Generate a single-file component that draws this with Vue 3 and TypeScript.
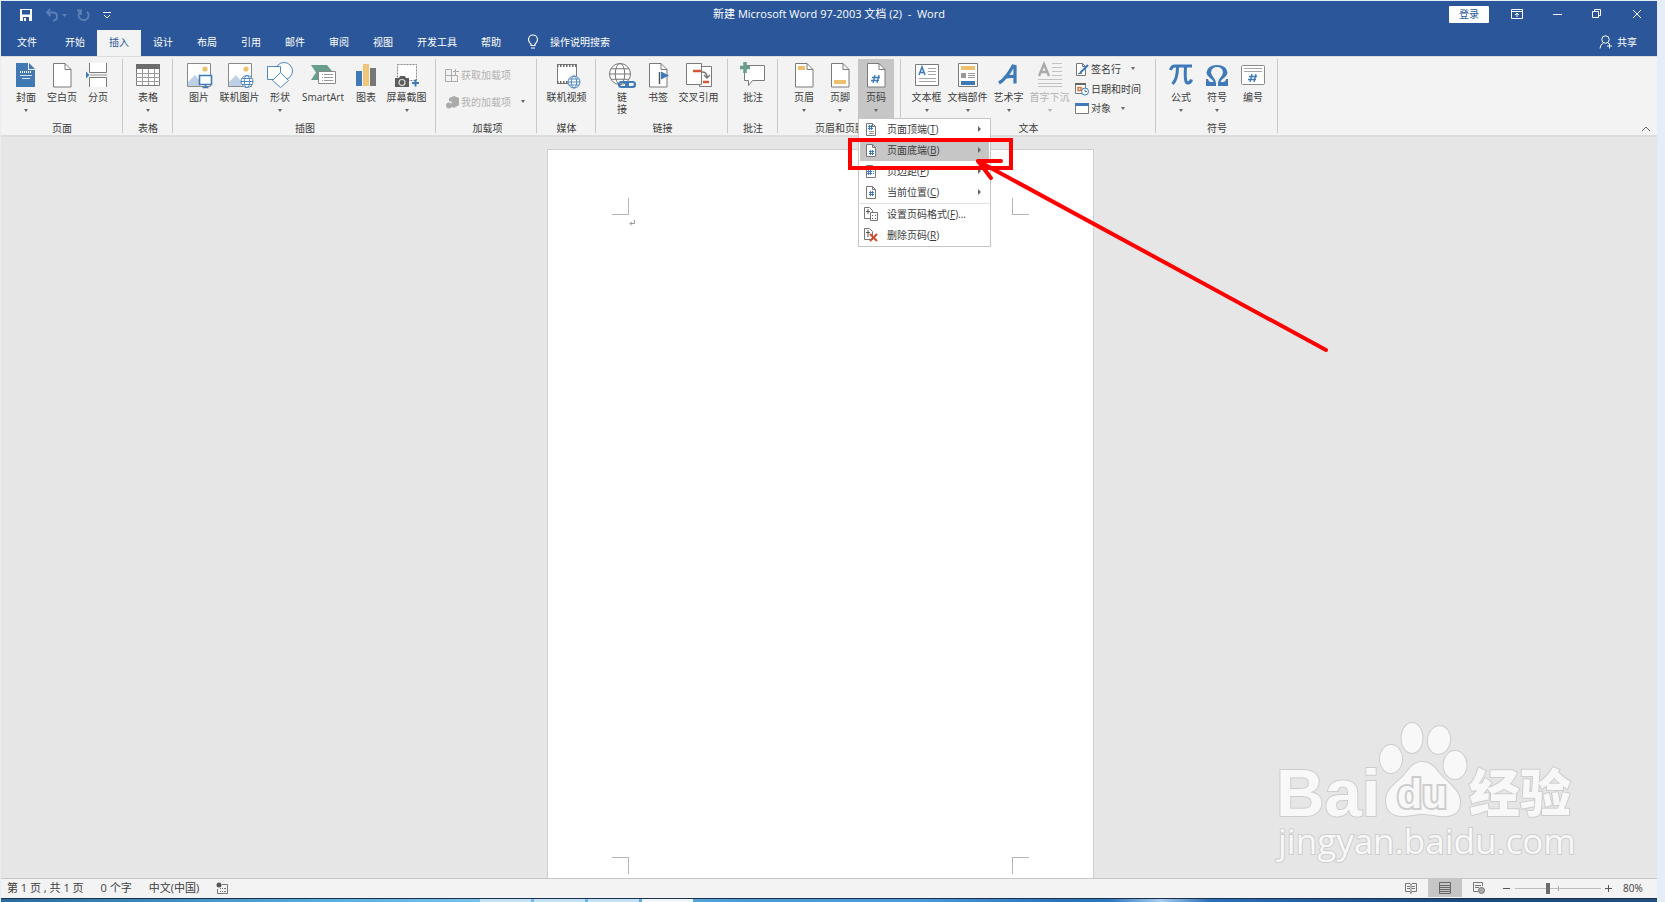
<script setup lang="ts">
import { ref } from 'vue'

interface RibbonButton {
  label: string
  icon: string
  arrow?: boolean
  wide?: boolean
  wider?: boolean
  disabled?: boolean
  menu?: boolean
}
interface SmallButton {
  label: string
  icon: string
  arrow?: boolean
  disabled?: boolean
}
interface RibbonGroup {
  name: string
  buttons: RibbonButton[]
  small?: SmallButton[]
  kind?: string
}

const tabs = ['文件', '开始', '插入', '设计', '布局', '引用', '邮件', '审阅', '视图', '开发工具', '帮助']
const activeTab = ref('插入')
const zoom = ref(80)

const groups: RibbonGroup[] = [
  {
    name: '页面',
    buttons: [
      { label: '封面', icon: 'cover', arrow: true },
      { label: '空白页', icon: 'blank' },
      { label: '分页', icon: 'break' },
    ],
  },
  { name: '表格', buttons: [{ label: '表格', icon: 'table', arrow: true }] },
  {
    name: '插图',
    kind: 'roomy',
    buttons: [
      { label: '图片', icon: 'picture' },
      { label: '联机图片', icon: 'onlinePicture', wide: true },
      { label: '形状', icon: 'shapes', arrow: true },
      { label: 'SmartArt', icon: 'smartart', wider: true },
      { label: '图表', icon: 'chart' },
      { label: '屏幕截图', icon: 'screenshot', arrow: true, wide: true },
    ],
  },
  {
    name: '加载项',
    kind: 'addins',
    buttons: [],
    small: [
      { label: '获取加载项', icon: 'getAddins', disabled: true },
      { label: '我的加载项', icon: 'myAddins', arrow: true, disabled: true },
    ],
  },
  { name: '媒体', buttons: [{ label: '联机视频', icon: 'video', wide: true }] },
  {
    name: '链接',
    kind: 'roomy',
    buttons: [
      { label: '链\n接', icon: 'link' },
      { label: '书签', icon: 'bookmark' },
      { label: '交叉引用', icon: 'crossref', wide: true },
    ],
  },
  { name: '批注', buttons: [{ label: '批注', icon: 'comment' }] },
  {
    name: '页眉和页脚',
    kind: 'roomy',
    buttons: [
      { label: '页眉', icon: 'header', arrow: true },
      { label: '页脚', icon: 'footer', arrow: true },
      { label: '页码', icon: 'pageNumber', arrow: true, menu: true },
    ],
  },
  {
    name: '文本',
    kind: 'text',
    buttons: [
      { label: '文本框', icon: 'textbox', arrow: true },
      { label: '文档部件', icon: 'parts', arrow: true, wide: true },
      { label: '艺术字', icon: 'wordart', arrow: true },
      { label: '首字下沉', icon: 'dropcap', arrow: true, wide: true, disabled: true },
    ],
    small: [
      { label: '签名行', icon: 'signature', arrow: true },
      { label: '日期和时间', icon: 'date' },
      { label: '对象', icon: 'object', arrow: true },
    ],
  },
  {
    name: '符号',
    buttons: [
      { label: '公式', icon: 'equation', arrow: true },
      { label: '符号', icon: 'symbol', arrow: true },
      { label: '编号', icon: 'number' },
    ],
  },
]

const menuItems = [
  { text: '页面顶端', key: 'T', icon: 'mTop', sub: true },
  { text: '页面底端', key: 'B', icon: 'mBottom', sub: true, active: true },
  { text: '页边距', key: 'P', icon: 'mMargin', sub: true },
  { text: '当前位置', key: 'C', icon: 'mCurrent', sub: true },
  { text: '设置页码格式', key: 'F', icon: 'mFormat', tail: '...', divided: true },
  { text: '删除页码', key: 'R', icon: 'mRemove' },
]

const globe = (x: number, y: number, r: number, c: string) =>
  `<g fill="#fff" stroke="${c}"><circle cx="${x}" cy="${y}" r="${r}"/><ellipse cx="${x}" cy="${y}" rx="${r * 0.45}" ry="${r}" fill="none"/><path fill="none" d="M${x - r} ${y}h${2 * r}M${x - r * 0.85} ${y - r * 0.5}h${r * 1.7}M${x - r * 0.85} ${y + r * 0.5}h${r * 1.7}"/></g>`
const sheet = '<path d="M4.500 1.500h11.500l6 6v17.500h-17.500z" fill="#fff" stroke="#7b7b7b"/><path d="M16 1.500v6h6" fill="none" stroke="#7b7b7b"/>'
const photo =
  '<path d="M1.500 1.500h23v23h-23z" fill="#fff" stroke="#8a8a8a"/><path d="M2 24v-4l7-7 5 6v5z" fill="#bdd0e6"/><circle cx="19" cy="7" r="2.600" fill="#ecc06c"/>'
const miniSheet = '<path d="M2.500 1.500h6l3 3v9h-9z" fill="#fff" stroke="#777"/><path d="M8.500 1.500v3h3" fill="none" stroke="#777"/>'
const miniHash = (x: number, y: number) =>
  `<path d="M${x + 1.5} ${y}v5M${x + 3.5} ${y}v5M${x} ${y + 1.5}h5M${x} ${y + 3.5}h5" stroke="#3f7ab8" fill="none"/>`
const hash = (x: number, y: number) =>
  `<path d="M${x + 3} ${y}l-2 8M${x + 7} ${y}l-2 8M${x} ${y + 2.5}h8M${x - 1} ${y + 5.5}h8" stroke="#3f7ab8" stroke-width="1.300" fill="none"/>`

const icons: Record<string, string> = {
  cover:
    '<path d="M3 1h12v7h7v17h-19z" fill="#4179b5"/><path d="M16 1l6 6h-6z" fill="#4179b5"/><path d="M7 10h12" stroke="#fff" stroke-width="2" stroke-dasharray="1 1"/><path d="M7 13.500h12M9 16.500h8" stroke="#d6e4f2"/>',
  blank: sheet,
  break:
    '<path d="M4.500 1v9.500h17v-9.500M4.500 25v-9.500h17v9.500" fill="#fff" stroke="#7b7b7b"/><path d="M5 13h17" stroke="#999"/><path d="M1 9.500l3.500 3.500-3.500 3.500z" fill="#3f7ab8"/>',
  table:
    '<path d="M1.500 2.500h23v21h-23z" fill="#fff" stroke="#7b7b7b"/><path d="M1 2h24v5h-24z" fill="#6b6b6b"/><path d="M1 11.500h24M1 15.500h24M1 19.500h24M7.500 7v16M13.500 7v16M19.500 7v16" stroke="#9a9a9a"/>',
  picture: photo + '<path d="M13.500 13.500h12v9h-12z" fill="#fff" stroke="#3f7ab8" stroke-width="1.600"/><path d="M19.500 22v3M16.500 25.500h6" stroke="#3f7ab8" stroke-width="1.600"/>',
  onlinePicture: photo + globe(20, 19.5, 6, '#4f87bf'),
  shapes:
    '<g fill="#fff" stroke="#4f87bf"><circle cx="17" cy="9" r="8.500"/><path d="M.5 4.500h13v13h-13z"/><path d="M13.500 10.500l8 8-8 7-8-7z"/></g>',
  smartart:
    '<path d="M1 3h16l5 6h-13v9h-8l5-7.500z" fill="#6a9e8c"/><path d="M8.500 9.500h17v12h-17z" fill="#fff" stroke="#888"/><path d="M12 12.500h1M14 12.500h9M12 15.500h1M14 15.500h9M12 18.500h1M14 18.500h9" stroke="#999"/>',
  chart: '<path d="M3 9h6v15h-6z" fill="#3f7ab8"/><path d="M10 2h6v22h-6z" fill="#edc67a"/><path d="M17 6h6v18h-6z" fill="#777"/>',
  screenshot:
    '<path d="M3.500 2.500h19v16h-19z" fill="#fff" stroke="#888" stroke-dasharray="2 1"/><path d="M1 16h4l1-2h5l1 2h3v9h-14z" fill="#5d5d5d"/><circle cx="8" cy="20.500" r="3" fill="#5d5d5d" stroke="#ddd" stroke-width="1.200"/><path d="M21.500 17.500v7M18 21h7" stroke="#3f7ab8" stroke-width="2"/>',
  video:
    '<path d="M3.500 2.500h19v19h-19z" fill="#fff" stroke="#7b7b7b"/><path d="M3 3.500h20M3 20.500h11" stroke="#6b6b6b" stroke-width="3" stroke-dasharray="1.500 1.500"/>' + globe(20, 20, 6, '#4f87bf'),
  link:
    globe(11, 12, 10.5, '#777') +
    '<g fill="none" stroke="#3f7ab8" stroke-width="2.200"><rect x="10" y="20" width="9" height="5" rx="2.500"/><rect x="17" y="20" width="9" height="5" rx="2.500"/></g>',
  bookmark: sheet + '<path d="M14.500 10v12" stroke="#555" stroke-width="1.500"/><path d="M16 9.500l8 4-8 4z" fill="#3f7ab8"/>',
  crossref:
    '<path d="M13.500 4.500h12v20h-12z" fill="#fff" stroke="#7b7b7b"/><path d="M.5 1.500h15v21h-15z" fill="#fff" stroke="#7b7b7b"/><path d="M7 9h8" stroke="#d65532" stroke-width="2.500"/><path d="M17 20h6" stroke="#d65532" stroke-width="2.500"/><path d="M16 10q5 0 5 5M18 13l3 3 3-3" fill="none" stroke="#777" stroke-width="1.500"/>',
  comment:
    '<path d="M4.500 3.500h20v15h-12l-4 5v-5h-4z" fill="#fff" stroke="#7b7b7b"/><path d="M5 0v11M0 5.500h10" stroke="#6a9e8c" stroke-width="3.500"/>',
  header: sheet + '<path d="M7 4h7v4h-7z" fill="#ecc06c"/>',
  footer: sheet + '<path d="M7 18h12v4h-12z" fill="#ecc06c"/>',
  pageNumber: sheet + hash(9, 13),
  textbox:
    '<path d="M1.500 2.500h23v21h-23z" fill="#fff" stroke="#7b7b7b"/><path d="M5 13l3-8 3 8M6 10.500h4" fill="none" stroke="#3f7ab8" stroke-width="1.500"/><path d="M14 6.500h8M14 9.500h8M14 12.500h8M5 16.500h17M5 19.500h17" stroke="#a5a5a5"/>',
  parts:
    '<path d="M3.500 1.500h19v23h-19z" fill="#fff" stroke="#7b7b7b"/><path d="M6 4h14v4h-14z" fill="#ecc06c"/><path d="M6 11h5v5h-5z" fill="#999"/><path d="M13 11.500h7M13 13.500h7M13 15.500h7" stroke="#999"/><path d="M6 19h14v4h-14z" fill="#3f7ab8"/>',
  wordart: '<path d="M3 21q7-4 14-17l2 .5v17M8 15.500q6-1.500 11-1" fill="none" stroke="#3f7ab8" stroke-width="3.200"/>',
  dropcap:
    '<path d="M2 14l5-12 5 12M4 10h7" fill="none" stroke="#aaa" stroke-width="2.400"/><path d="M15 1.500h10M15 5.500h10M15 9.500h10M15 13.500h10M1 17.500h24M1 21.500h24M1 24.500h24" stroke="#c2c2c2"/>',
  equation: '<path d="M2.500 8q1-4 4.500-4h17M9.500 5q0 12-5 17M17.500 5q-1 16 2 16 3 0 4-3.500" fill="none" stroke="#3f7ab8" stroke-width="3"/>',
  symbol:
    '<path d="M2 17h2q.5 3 3 3h2.500q-1-2.500-4-4.500T2.500 10.500Q3.500 3 13 3t10.500 7.500q0 3-3 5t-4 4.500H19q2.500 0 3-3h2v7H14v-3q.5-3.500 2.500-5.500t2.500-5Q18.500 5 13 5t-6 5.500q.5 3 2.500 5T12 21v3H2z" fill="#3f7ab8"/>',
  number: '<rect x="1.500" y="3.500" width="23" height="19" rx="1" fill="#fff" stroke="#8a8a8a"/><path d="M4 6.500h18M4 9.500h18" stroke="#a5a5a5"/>' + hash(9, 12),
  getAddins: '<path d="M.5 1.500h6v6h-6zM.5 7.500h6v6h-6zM6.500 7.500h6v6h-6zM8 3.500h6M10.500 1v6" fill="none" stroke="#ababab"/>',
  myAddins: '<path d="M4 3l5-2 5 2v7l-5 3-3-2 1-4-3-1z" fill="#ababab"/><circle cx="4" cy="10.500" r="3" fill="#ababab"/>',
  signature: '<path d="M1.500 1.500h6l3 3v9h-9z" fill="#fff" stroke="#777"/><path d="M7.500 1.500v3h3" fill="none" stroke="#777"/><path d="M5 11l8-8" stroke="#3f7ab8" stroke-width="2.200"/><path d="M3 11.500h4" stroke="#777"/>',
  date: '<path d="M.5 1.500h10v10h-10z" fill="#fff" stroke="#777"/><path d="M0 2h11" stroke="#666" stroke-width="2"/><path d="M3 5.500h3v3h-3z" fill="none" stroke="#d87736" stroke-width="1.500"/><circle cx="10" cy="9.500" r="3.500" fill="#fff" stroke="#3f7ab8"/><path d="M10 7.500v2h2" fill="none" stroke="#3f7ab8"/>',
  object: '<path d="M.5 2.500h13v10h-13z" fill="#fff" stroke="#7b7b7b"/><path d="M0 3.500h14" stroke="#3f7ab8" stroke-width="3"/>',
  mTop: miniSheet + miniHash(4, 3) + '<path d="M5 9.500h5M5 11.500h5" stroke="#999"/>',
  mBottom: miniSheet + miniHash(5, 7),
  mMargin: miniSheet + miniHash(3, 6) + '<path d="M9 7.500h1M9 9.500h1" stroke="#3f7ab8"/>',
  mCurrent: miniSheet + miniHash(5, 6),
  mFormat: '<path d="M.5 .5h5l3 3v8h-8z" fill="#fff" stroke="#777"/><path d="M2 4.500h4M4 2v5" stroke="#555"/><path d="M6.500 5.500h7v8h-7z" fill="#fff" stroke="#777"/><path d="M8 8.500h1M11 8.500h1M8 11.500h1M11 11.500h1" stroke="#555"/>',
  mRemove: '<path d="M.5 .5h5l3 3v8h-8z" fill="#fff" stroke="#777"/><path d="M2 4.500h4M4 2v7" stroke="#555"/><path d="M6 6l7 7M13 6l-7 7" stroke="#d04a2b" stroke-width="2"/>',
}
</script>

<template>
  <div class="screen">
    <div class="window">
      <header class="titlebar">
        <div class="quick">
          <button type="button" aria-label="保存">
            <svg width="14" height="14" viewBox="0 0 14 14"><path d="M1 1h12v12H1z" fill="#fff" /><path d="M3 2h8v4.500H3zM4 9h6v4H4z" fill="#2b579a" /><path d="M5 10h2v3H5z" fill="#fff" /></svg>
          </button>
          <button type="button" class="faded" aria-label="撤消">
            <svg width="22" height="14" viewBox="0 0 22 14"><path d="M5 1L2 4.500l3.500 3.500M2 4.500h6q4 0 4 4t-4 4" fill="none" stroke="#7f9ccb" stroke-width="1.800" /><path d="M17 6h5l-2.500 3z" fill="#7f9ccb" /></svg>
          </button>
          <button type="button" class="faded" aria-label="重复">
            <svg width="12" height="14" viewBox="0 0 12 14"><path d="M3 3A5 5 0 1 0 9 3.500M3 7V2.500H-1" fill="none" stroke="#7f9ccb" stroke-width="1.800" transform="translate(-1 0)" /></svg>
          </button>
          <button type="button" aria-label="自定义快速访问工具栏">
            <svg width="8" height="8" viewBox="0 0 8 8"><path d="M0 1.500h8M1 4l3 3 3-3" fill="none" stroke="#fff" /></svg>
          </button>
        </div>
        <h1>新建 Microsoft Word 97-2003 文档 (2)&nbsp; -&nbsp; Word</h1>
        <div class="controls">
          <button type="button" class="login">登录</button>
          <button type="button" class="ctl" aria-label="功能区显示选项">
            <svg width="12" height="10" viewBox="0 0 12 10"><path d="M.5 .5h11v9H.5zM0 2.500h12M6 8V4.500M4 6l2-2 2 2" fill="none" stroke="#fff" /></svg>
          </button>
          <button type="button" class="ctl" aria-label="最小化">
            <svg width="10" height="10" viewBox="0 0 10 10"><path d="M1 5.500h9" stroke="#fff" /></svg>
          </button>
          <button type="button" class="ctl" aria-label="还原">
            <svg width="10" height="10" viewBox="0 0 10 10"><path d="M.5 2.500h6v6h-6zM2.500 2.500v-2h6v6h-2" fill="none" stroke="#fff" /></svg>
          </button>
          <button type="button" class="ctl" aria-label="关闭">
            <svg width="10" height="10" viewBox="0 0 10 10"><path d="M1 1l8 8M9 1L1 9" stroke="#fff" /></svg>
          </button>
        </div>
      </header>

      <nav class="tabs">
        <button
          v-for="tab in tabs"
          :key="tab"
          type="button"
          :class="{ active: tab === activeTab, file: tab === '文件' }"
          @click="activeTab = tab"
        >{{ tab }}</button>
        <button type="button" class="tell">
          <svg width="12" height="16" viewBox="0 0 12 16"><path d="M4 11.500V10Q1.500 8 1.500 5.500a4.500 4.500 0 0 1 9 0Q10.500 8 8 10v1.500zM4 14h4" fill="none" stroke="#fff" stroke-width="1.200" /></svg>
          <span>操作说明搜索</span>
        </button>
        <button type="button" class="share">
          <svg width="14" height="14" viewBox="0 0 14 14"><circle cx="6.500" cy="4.500" r="3.700" fill="none" stroke="#fff" /><path d="M1 13.500q0-4 3.500-5.500M9 8l1 1M10.500 8.500v5M8 11h5" fill="none" stroke="#fff" /></svg>
          <span>共享</span>
        </button>
      </nav>

      <div class="ribbon">
        <section v-for="group in groups" :key="group.name" class="group" :class="group.kind">
          <div class="tools">
            <div v-for="b in group.buttons" :key="b.label" class="cell" :class="{ wide: b.wide, wider: b.wider }">
              <button type="button" class="big" :class="{ pressed: b.menu }" :disabled="b.disabled">
                <svg width="26" height="26" viewBox="0 0 26 26" v-html="icons[b.icon]"></svg>
                <span class="caption">{{ b.label }}</span>
                <i v-if="b.arrow" class="down"></i>
              </button>
              <template v-if="b.menu">
                <div class="menu" role="menu">
                  <button
                    v-for="m in menuItems"
                    :key="m.key"
                    type="button"
                    role="menuitem"
                    :class="{ hot: m.active, divided: m.divided }"
                  >
                    <svg width="14" height="14" viewBox="0 0 14 14" v-html="icons[m.icon]"></svg>
                    <span>{{ m.text }}(<u>{{ m.key }}</u>){{ m.tail }}</span>
                    <i v-if="m.sub" class="right"></i>
                  </button>
                </div>
                <svg class="callout" width="490" height="230" viewBox="0 0 490 230">
                  <path d="M2 13h161v28H2z" fill="none" stroke="#f00" stroke-width="4" />
                  <path d="M478 223L130 34M153 34h-23l13 17" fill="none" stroke="#f00" stroke-width="4" stroke-linecap="round" stroke-linejoin="round" />
                </svg>
              </template>
            </div>
            <div v-if="group.small" class="stack">
              <button v-for="s in group.small" :key="s.label" type="button" class="little" :disabled="s.disabled">
                <svg width="14" height="14" viewBox="0 0 14 14" v-html="icons[s.icon]"></svg>
                <span>{{ s.label }}</span>
                <i v-if="s.arrow" class="down"></i>
              </button>
            </div>
          </div>
          <h2>{{ group.name }}</h2>
        </section>
        <button type="button" class="collapse" aria-label="折叠功能区">
          <svg width="10" height="6" viewBox="0 0 10 6"><path d="M1 5l4-4 4 4" fill="none" stroke="#666" /></svg>
        </button>
      </div>

      <main class="workspace">
        <article class="paper">
          <div class="marks"><i class="corner tl"></i><i class="corner tr"></i></div>
          <p>
            <svg width="6" height="6" viewBox="0 0 6 6"><path d="M5.500 0v3.500H1M3 1.500l-2 2 2 2" fill="none" stroke="#999" /></svg>
          </p>
          <div class="marks"><i class="corner bl"></i><i class="corner br"></i></div>
        </article>
        <svg class="watermark" width="320" height="150" viewBox="0 0 320 150" fill="#f8f8f8" stroke="#cdcdcd" stroke-width="2" paint-order="stroke">
          <text x="8" y="96" class="brand">Bai</text>
          <ellipse cx="123" cy="39" rx="11" ry="14" />
          <ellipse cx="144" cy="18" rx="10.500" ry="15" />
          <ellipse cx="171" cy="20" rx="11" ry="14" transform="rotate(8 171 20)" />
          <ellipse cx="187" cy="45" rx="11.500" ry="14" />
          <path d="M154 42c9 0 13 6 17 11 8 10 22 17 21 30 0 12-11 14-20 13-7-1-11-2-18-2s-12 2-20 2c-9 0-16-5-16-15 0-13 12-18 20-28 4-5 8-11 16-11z" />
          <text x="129" y="88" class="du">du</text>
          <text x="201" y="92" class="cn">经验</text>
          <text x="10" y="134" class="url">jingyan.baidu.com</text>
        </svg>
      </main>

      <footer class="status">
        <span>第 1 页 , 共 1 页</span>
        <span>0 个字</span>
        <span>中文(中国)</span>
        <svg width="12" height="12" viewBox="0 0 12 12"><circle cx="3" cy="3" r="2.500" fill="#555" /><path d="M6 2.500h5.500v9h-10V7M4 6.500h1M6 6.500h1M8 6.500h2M4 9.500h1M6 9.500h1M8 9.500h2" fill="none" stroke="#777" /></svg>
        <div class="views">
          <button type="button" aria-label="阅读视图">
            <svg width="12" height="12" viewBox="0 0 12 12"><path d="M.5 1.500h4.500l1 1 1-1h4.500v8H7l-1 1-1-1H.5zM6 2v10M2 4.500h3M2 6.500h3M7 4.500h3M7 6.500h3" fill="none" stroke="#777" /></svg>
          </button>
          <button type="button" class="on" aria-label="页面视图">
            <svg width="12" height="12" viewBox="0 0 12 12"><path d="M.5 .5h11v11H.5zM1 3.500h10M1 5.500h10M1 7.500h10M1 9.500h10" fill="none" stroke="#666" /></svg>
          </button>
          <button type="button" aria-label="Web 版式视图">
            <svg width="12" height="12" viewBox="0 0 12 12"><path d="M5 9.500H.5v-9h9V4M2 3.500h6M2 5.500h4" fill="none" stroke="#777" /><circle cx="8.500" cy="8.500" r="3" fill="#aaa" stroke="#777" /></svg>
          </button>
        </div>
        <div class="zoom">
          <button type="button" aria-label="缩小"><svg width="8" height="8" viewBox="0 0 8 8"><path d="M0 4.500h7" stroke="#555" /></svg></button>
          <input v-model.number="zoom" type="range" min="20" max="180" aria-label="显示比例" />
          <button type="button" aria-label="放大"><svg width="8" height="8" viewBox="0 0 8 8"><path d="M0 4.500h7M3.500 1v7" stroke="#555" /></svg></button>
          <output>{{ zoom }}%</output>
        </div>
      </footer>
      <div class="taskbar"><i></i><i></i><i></i><i></i></div>
    </div>
  </div>
</template>

<style>
body {
  margin: 0;
}
</style>

<style scoped>
* {
  box-sizing: border-box;
}
.screen {
  min-height: 100vh;
  display: flex;
  padding: 1px 8px 0 1px;
  background: #e4edf8;
  font: 10px/12px "Open Sans", "Noto Sans CJK SC", sans-serif;
  color: #3c3c3c;
}
.window {
  flex: 1;
  min-width: 0;
  display: flex;
  flex-direction: column;
}
button {
  border: 0;
  padding: 0;
  background: none;
  color: inherit;
  font: inherit;
  white-space: nowrap;
}
svg {
  display: block;
  flex: none;
  overflow: visible;
}
h1,
h2,
p {
  margin: 0;
  font: inherit;
}
.titlebar {
  height: 29px;
  display: grid;
  grid-template-columns: 1fr auto 1fr;
  align-items: center;
  padding-bottom: 3px;
  background: #2b579a;
  color: #fff;
}
.titlebar h1 {
  font-size: 11px;
}
.quick {
  display: flex;
  align-items: center;
  gap: 12px;
  padding: 2px 0 0 18px;
}
.faded {
  opacity: 0.6;
}
.controls {
  display: flex;
  justify-content: flex-end;
  align-items: center;
}
.login {
  width: 40px;
  height: 17px;
  margin-right: 8px;
  border-radius: 1px;
  background: #fff;
  color: #2b579a;
}
.ctl {
  width: 40px;
  height: 26px;
  display: grid;
  place-items: center;
}
.tabs {
  height: 26px;
  display: flex;
  background: #2b579a;
  color: #fff;
}
.tabs button {
  padding: 0 12px 2px;
}
.tabs .file {
  padding: 0 16px 2px;
}
.tabs .active {
  background: #f3f3f3;
  color: #2b579a;
}
.tabs .tell,
.tabs .share {
  display: flex;
  align-items: center;
  gap: 11px;
}
.tabs .tell {
  padding-left: 14px;
}
.tabs .share {
  gap: 4px;
  margin-left: auto;
  padding-right: 20px;
}
.ribbon {
  position: relative;
  z-index: 2;
  display: flex;
  padding: 2px 0;
  background: #f3f3f3;
  border-top: 1px solid #dcdcdc;
  border-bottom: 2px solid #dcdcdc;
}
.group {
  display: flex;
  flex-direction: column;
  flex: none;
  height: 74px;
  padding: 0 6px 0 7px;
  border-right: 1px solid #c9c9c9;
}
.group h2 {
  margin-top: 4px;
  text-align: center;
}
.tools {
  display: flex;
  flex: none;
  height: 59px;
}
.cell {
  position: relative;
  width: 36px;
}
.wide {
  width: 45px;
}
.wider {
  width: 50px;
}
.big {
  width: 100%;
  height: 59px;
  display: flex;
  flex-direction: column;
  align-items: center;
  padding-top: 3px;
}
.big.pressed {
  background: #c6c6c6;
}
.caption {
  margin-top: 3px;
  white-space: pre;
}
.down {
  border: 2px solid transparent;
  border-top: 3px solid #666;
  border-bottom: 0;
}
.big .down {
  margin-top: 6px;
}
button:disabled {
  color: #b1b1b1;
}
button:disabled .down {
  border-top-color: #b1b1b1;
}
.stack {
  display: flex;
  flex-direction: column;
}
.little {
  display: flex;
  align-items: center;
  gap: 2px;
  height: 20px;
}
.little .down {
  margin-left: 8px;
}
.roomy {
  padding-left: 8px;
}
.addins {
  width: 101px;
  padding-left: 9px;
}
.addins .stack {
  padding-top: 2px;
}
.addins .little {
  height: 27px;
}
.addins .little:disabled .down {
  border-top-color: #666;
}
.text {
  width: 255px;
}
.text .cell:not(.wide) {
  width: 37px;
}
.text .stack {
  padding-left: 3px;
}
.menu {
  position: absolute;
  z-index: 3;
  top: 59px;
  left: 0;
  width: 133px;
  padding: 0 1px;
  background: #fff;
  border: 1px solid #c6c6c6;
}
.menu button {
  display: flex;
  align-items: center;
  gap: 9px;
  width: 100%;
  height: 21px;
  padding: 0 8px 1px 4px;
}
.menu .divided {
  height: 22px;
  border-top: 1px solid #e1e1e1;
}
.menu .hot {
  background: #c6c6c6;
}
.right {
  margin-left: auto;
  border: 3px solid transparent;
  border-left: 3px solid #666;
  border-right: 0;
}
.callout {
  position: absolute;
  z-index: 4;
  top: 68px;
  left: -10px;
  pointer-events: none;
}
.collapse {
  align-self: flex-end;
  margin-left: auto;
  padding: 0 6px 1px;
}
.workspace {
  position: relative;
  flex: 1;
  display: flex;
  justify-content: center;
  padding: 12px 17px 0 0;
  overflow: hidden;
  background: #e6e6e6;
}
.paper {
  width: 33.4%;
  display: flex;
  flex-direction: column;
  padding: 48px 64px 4px;
  background: #fff;
  border: 1px solid #cfcfcf;
  border-bottom: 0;
}
.marks {
  display: flex;
  justify-content: space-between;
}
.paper p {
  flex: 1;
  padding: 5px 0 0 17px;
}
.corner {
  width: 17px;
  height: 17px;
  border: 0 solid #b5b5b5;
}
.tl {
  border-width: 0 1px 1px 0;
}
.tr {
  border-width: 0 0 1px 1px;
}
.bl {
  border-width: 1px 1px 0 0;
}
.br {
  border-width: 1px 0 0 1px;
}
.watermark {
  position: absolute;
  right: 69px;
  bottom: 8px;
}
.brand {
  font: 700 67px "Liberation Sans", sans-serif;
}
.du {
  font: 700 41px "Liberation Sans", sans-serif;
  stroke-width: 4px;
}
.cn {
  font: 900 51px "Noto Sans CJK SC", sans-serif;
}
.url {
  font: 400 35px "Open Sans", sans-serif;
}
.status {
  display: flex;
  align-items: center;
  gap: 17px;
  height: 20px;
  padding: 0 10px 1px 6px;
  background: #f3f3f3;
  border-top: 1px solid #c6c6c6;
}
.status > span {
  font-size: 11px;
}
.views {
  display: flex;
  align-self: stretch;
  margin-left: auto;
}
.views button {
  width: 34px;
  display: grid;
  place-items: center;
}
.views .on {
  background: #c6c6c6;
}
.zoom {
  display: flex;
  align-items: center;
  gap: 4px;
  margin-left: -10px;
}
.zoom input {
  appearance: none;
  width: 86px;
  height: 12px;
  margin: 0;
  background: linear-gradient(#bdbdbd, #bdbdbd) center / 100% 1px no-repeat, linear-gradient(#aaa, #aaa) center / 1px 5px no-repeat;
}
.zoom input::-webkit-slider-thumb {
  appearance: none;
  width: 4px;
  height: 11px;
  background: #6b6b6b;
}
.zoom output {
  margin-left: 6px;
  min-width: 24px;
}
.taskbar {
  display: flex;
  gap: 3px;
  height: 4px;
  padding-left: 479px;
  border-top: 1px solid #17314e;
  background: linear-gradient(90deg, #2a6a9c, #5aaede 20%, #7cc3ea 30%, #4c9bd4 45%, #4d9cd8 55%, #2c72b8 64%, #2f78bd 67%, #a9cdf0 70%, #2b6fb5 73%, #1b4a7e 88%, #24507e);
}
.taskbar i {
  width: 51px;
  background: #c4e0f4;
}
.taskbar i:last-child {
  background: #f0f6fc;
}
</style>
